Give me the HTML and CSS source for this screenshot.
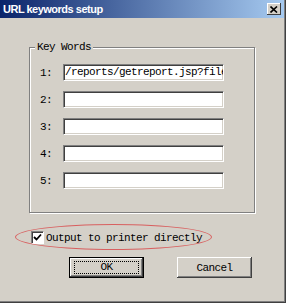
FILE: index.html
```html
<!DOCTYPE html>
<html lang="en">
  <head>
    <meta charset="UTF-8" />
    <title>URL keywords setup</title>
    <link rel="stylesheet" href="styles.css">
  </head>

  <body>
    <div class="dialog">
      <div class="titlebar">
        <span class="title">URL keywords setup</span>
        <span class="close">
          <svg width="8" height="7" viewBox="0 0 8 7">
            <path d="M0.5 0.5 L7 6.5 M7 0.5 L0.5 6.5" stroke="#000" stroke-width="1.6" />
          </svg>
        </span>
      </div>

      <fieldset class="keywords">
        <legend>Key Words</legend>
        <div class="rows">
          <div class="row"><span class="num">1:</span><div class="field">/reports/getreport.jsp?file</div></div>
          <div class="row"><span class="num">2:</span><div class="field"></div></div>
          <div class="row"><span class="num">3:</span><div class="field"></div></div>
          <div class="row"><span class="num">4:</span><div class="field"></div></div>
          <div class="row"><span class="num">5:</span><div class="field"></div></div>
        </div>
      </fieldset>

      <div class="option">
        <span class="ellipse"></span>
        <span class="checkbox">
          <svg width="9" height="9" viewBox="0 0 9 9">
            <path d="M1 4 L3.5 6.5 L8 1.5" fill="none" stroke="#000" stroke-width="1.8" />
          </svg>
        </span>
        <span>Output to printer directly</span>
      </div>

      <div class="buttons">
        <button class="btn default"><span class="focus">OK</span></button>
        <button class="btn">Cancel</button>
      </div>
    </div>
  </body>
</html>
```

FILE: styles.css
```css
body {
  margin: 0;
  background: #d4d0c8;
  font-family: "Liberation Mono", monospace;
  font-size: 11px;
  letter-spacing: -0.6px;
  color: #000;
}

.dialog {
  position: relative;
  width: 286px;
  height: 303px;
  box-sizing: border-box;
  border-right: 1px solid #404040;
  border-bottom: 1px solid #404040;
  box-shadow: inset -1px -1px 0 #808080;
  display: flex;
  flex-direction: column;
}

.titlebar {
  height: 18px;
  margin-right: 1px;
  padding: 0 3px;
  background: linear-gradient(to right, #0a246a, #a6caf0);
  display: flex;
  align-items: center;
  justify-content: space-between;
}

.title {
  font: bold 11px "Liberation Sans", sans-serif;
  letter-spacing: -0.5px;
  color: #fff;
}

.close {
  width: 14px;
  height: 12px;
  background: #d4d0c8;
  box-shadow: inset -1px -1px 0 #404040, inset 1px 1px 0 #fff;
  display: flex;
  align-items: center;
  justify-content: center;
}

.keywords {
  margin: 23px 0 0 29px;
  width: 226px;
  box-sizing: border-box;
  padding: 0 29px 23px 10px;
  border: 1px solid #808080;
  box-shadow: inset 1px 1px 0 #fff, 1px 1px 0 #fff;
}

.keywords legend {
  margin-left: -5px;
  padding: 0 2px;
  line-height: 12px;
  background: #d4d0c8;
}

.rows {
  margin-top: 11px;
  display: flex;
  flex-direction: column;
  gap: 10px;
}

.row {
  display: flex;
  align-items: center;
}

.num {
  width: 23px;
}

.field {
  width: 161px;
  height: 17px;
  box-sizing: border-box;
  padding-left: 1px;
  background: #fff;
  border-top: 1px solid #808080;
  border-left: 1px solid #808080;
  border-right: 1px solid #fff;
  border-bottom: 1px solid #fff;
  box-shadow: inset 1px 1px 0 #404040, inset -1px -1px 0 #d4d0c8;
  line-height: 15px;
  white-space: nowrap;
  overflow: hidden;
}

.option {
  position: relative;
  margin: 18px 0 0 31px;
  display: flex;
  align-items: center;
  gap: 2px;
  height: 13px;
}

.ellipse {
  position: absolute;
  left: -16px;
  top: -7px;
  width: 195px;
  height: 24px;
  border: 1px solid #d86060;
  border-radius: 50%;
}

.checkbox {
  width: 13px;
  height: 13px;
  box-sizing: border-box;
  background: #fff;
  border-top: 1px solid #808080;
  border-left: 1px solid #808080;
  border-right: 1px solid #fff;
  border-bottom: 1px solid #fff;
  box-shadow: inset 1px 1px 0 #404040;
  display: flex;
  align-items: center;
  justify-content: center;
}

.buttons {
  margin: 13px 0 0 69px;
  display: flex;
  gap: 33px;
}

.btn {
  width: 75px;
  height: 21px;
  padding: 0;
  border: none;
  background: #d4d0c8;
  font: inherit;
  letter-spacing: inherit;
  color: #000;
  box-shadow: inset -1px -1px 0 #404040, inset 1px 1px 0 #fff, inset -2px -2px 0 #808080;
  display: flex;
  align-items: center;
  justify-content: center;
}

.default {
  border: 1px solid #000;
}

.focus {
  width: 63px;
  height: 11px;
  line-height: 11px;
  border: 1px dotted #000;
  text-align: center;
}
```
